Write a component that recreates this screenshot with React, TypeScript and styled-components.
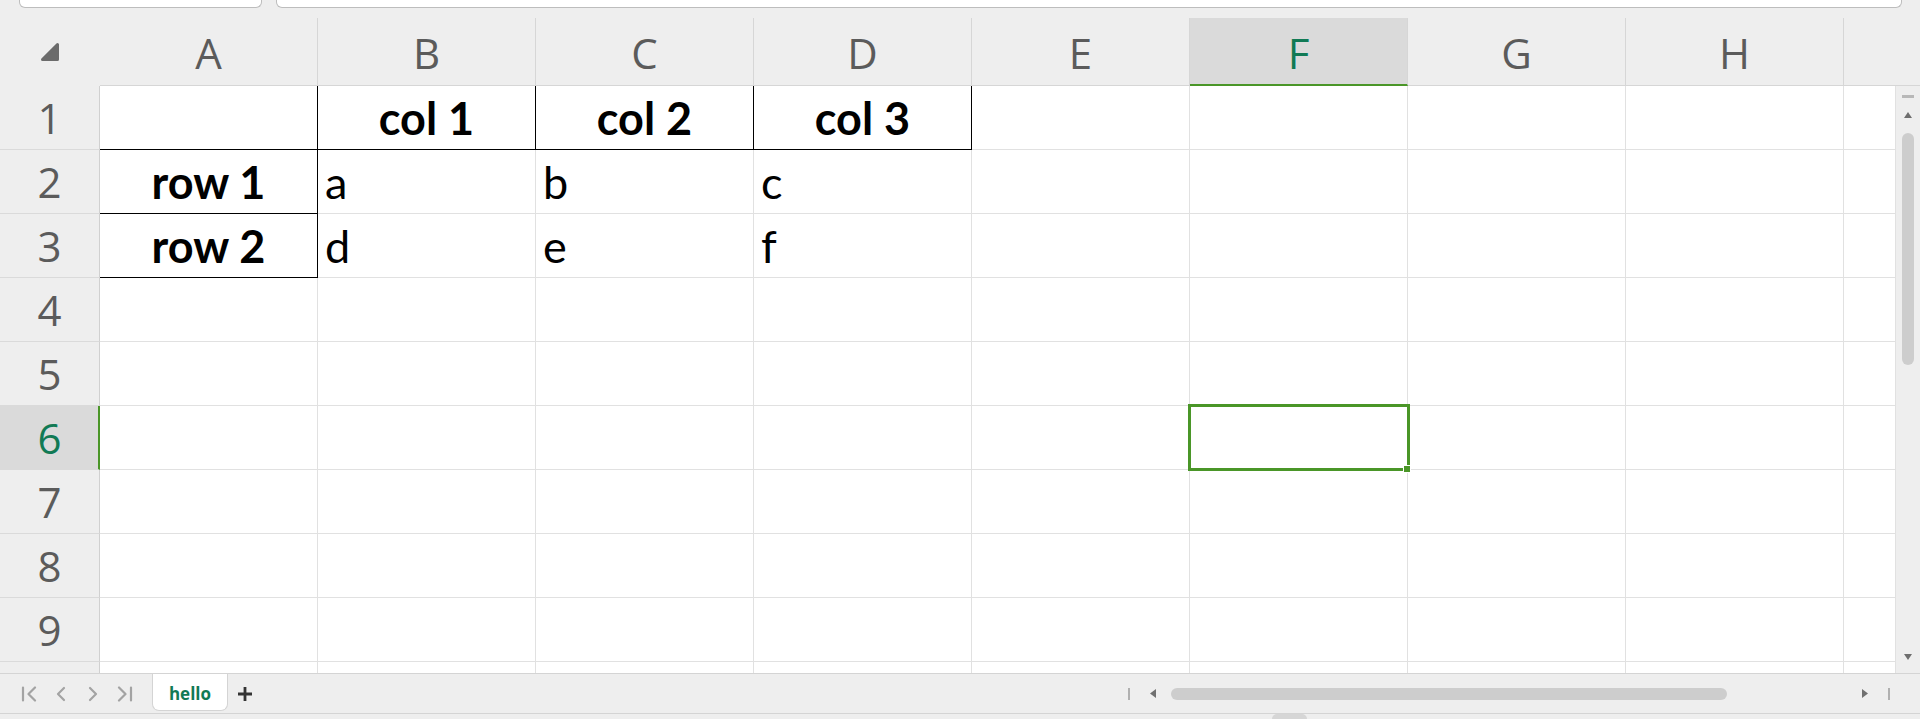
import React from "react";
import styled, { createGlobalStyle } from "styled-components";

const GREEN = "#4a9628";
const SEL_TEXT = "#117a55";

const Global = createGlobalStyle`
  html, body { margin: 0; padding: 0; background: #eeeeee; }
  #root { width: 1920px; height: 719px; overflow: hidden; }
`;

const Page = styled.div`
  width: 1920px;
  height: 719px;
  display: flex;
  flex-direction: column;
  background: #eeeeee;
  overflow: hidden;
  font-family: "Open Sans", "Noto Sans", sans-serif;
`;

const TopBar = styled.div`
  height: 18px;
  flex: none;
  display: flex;
  align-items: flex-start;
`;

const InputBox = styled.div<{ $grow?: boolean }>`
  box-sizing: border-box;
  height: 8px;
  background: #ffffff;
  border: 1px solid #bdbdbd;
  border-top: none;
  border-radius: 0 0 6px 6px;
  ${(p) => (p.$grow ? "flex: 1; margin: 0 18px 0 14px;" : "width: 243px; margin-left: 19px; flex: none;")}
`;

const HeaderRow = styled.div`
  height: 68px;
  flex: none;
  display: flex;
`;

const Corner = styled.div`
  width: 100px;
  flex: none;
  display: flex;
  align-items: center;
  justify-content: center;
`;

const ColHeader = styled.div<{ $sel?: boolean; $fill?: boolean }>`
  box-sizing: border-box;
  ${(p) => (p.$fill ? "flex: 1;" : "width: 218px; flex: none; border-right: 1px solid #d6d6d6;")}
  height: 68px;
  background: ${(p) => (p.$sel ? "#dadada" : "#eeeeee")};
  border-bottom: ${(p) => (p.$sel ? `2px solid ${GREEN}` : "1px solid #d6d6d6")};
  display: flex;
  align-items: center;
  justify-content: center;
  padding-top: ${(p) => (p.$sel ? "3px" : "2px")};
  font-family: "Open Sans", sans-serif;
  font-size: 42px;
  line-height: 42px;
  color: ${(p) => (p.$sel ? SEL_TEXT : "#5b5b5b")};
`;

const Body = styled.div`
  height: 587px;
  flex: none;
  display: flex;
`;

const GridArea = styled.div`
  flex: 1;
  display: flex;
  flex-direction: column;
  overflow: hidden;
  background: #ffffff;
`;

const Row = styled.div`
  height: 64px;
  flex: none;
  display: flex;
`;

const RowHeader = styled.div<{ $sel?: boolean }>`
  box-sizing: border-box;
  width: 100px;
  flex: none;
  height: 64px;
  background: ${(p) => (p.$sel ? "#dadada" : "#eeeeee")};
  border-right: ${(p) => (p.$sel ? `2px solid ${GREEN}` : "1px solid #d0d0d0")};
  border-bottom: 1px solid #dadada;
  display: flex;
  align-items: center;
  justify-content: center;
  padding-left: ${(p) => (p.$sel ? "1px" : "0")};
  font-family: "Open Sans", sans-serif;
  font-size: 42px;
  line-height: 42px;
  color: ${(p) => (p.$sel ? SEL_TEXT : "#5b5b5b")};
`;

const Cell = styled.div<{
  $rb?: boolean;
  $bb?: boolean;
  $bold?: boolean;
  $center?: boolean;
  $fill?: boolean;
  $sel?: boolean;
}>`
  box-sizing: border-box;
  ${(p) => (p.$fill ? "flex: 1;" : "width: 218px; flex: none;")}
  ${(p) => (p.$sel ? "position: relative;" : "")}
  height: 64px;
  border-right: 1px solid ${(p) => (p.$rb ? "#000000" : "#e1e1e1")};
  border-bottom: 1px solid ${(p) => (p.$bb ? "#000000" : "#e1e1e1")};
  display: flex;
  align-items: flex-end;
  justify-content: ${(p) => (p.$center ? "center" : "flex-start")};
  padding: 0 7px 8px;
  font-family: Lato, "Open Sans", sans-serif;
  font-size: 45px;
  line-height: 45px;
  font-weight: ${(p) => (p.$bold ? 700 : 400)};
  color: #000000;
  white-space: nowrap;
`;

const Selection = styled.div`
  position: absolute;
  box-sizing: border-box;
  top: -2px;
  left: -2px;
  right: -3px;
  bottom: -2px;
  border: 3px solid ${GREEN};
  pointer-events: none;
`;

const FillHandle = styled.div`
  position: absolute;
  box-sizing: border-box;
  width: 8px;
  height: 8px;
  right: -4px;
  bottom: -4px;
  background: ${GREEN};
  border: 1px solid #ffffff;
  z-index: 2;
`;

const VScroll = styled.div`
  width: 24px;
  flex: none;
  background: #eeeeee;
  display: flex;
  flex-direction: column;
  align-items: center;
`;

const Dash = styled.div`
  width: 12px;
  height: 3px;
  margin-top: 9px;
  background: #b8b8b8;
`;

const Thumb = styled.div<{ $horizontal?: boolean }>`
  background: #cdcdcd;
  border-radius: 6px;
  ${(p) =>
    p.$horizontal
      ? "width: 556px; height: 12px;"
      : "width: 12px; height: 232px; margin-top: 15px;"}
`;

const Spacer = styled.div`
  flex: 1;
`;

const Tri = styled.svg<{ $mt?: number; $mb?: number; $ml?: number; $mr?: number }>`
  display: block;
  flex: none;
  margin: ${(p) => `${p.$mt || 0}px ${p.$mr || 0}px ${p.$mb || 0}px ${p.$ml || 0}px`};
`;

const BottomBar = styled.div`
  box-sizing: border-box;
  height: 41px;
  flex: none;
  display: flex;
  align-items: center;
  border-top: 1px solid #d4d4d4;
  border-bottom: 1px solid #d4d4d4;
  background: #eeeeee;
`;

const NavGroup = styled.div`
  display: flex;
  align-items: center;
  margin-left: 13px;
`;

const NavButton = styled.div`
  width: 32px;
  height: 39px;
  display: flex;
  align-items: center;
  justify-content: center;
`;

const SheetTab = styled.div`
  box-sizing: border-box;
  align-self: flex-start;
  width: 76px;
  height: 37px;
  margin-left: 11px;
  background: #ffffff;
  border: 1px solid #d4d4d4;
  border-top: none;
  border-radius: 0 0 7px 7px;
  display: flex;
  align-items: center;
  justify-content: center;
  padding-top: 3px;
  font-family: "Open Sans", sans-serif;
  font-weight: 700;
  font-size: 17px;
  color: ${SEL_TEXT};
`;

const AddButton = styled.div`
  width: 24px;
  height: 39px;
  margin-left: 5px;
  display: flex;
  align-items: center;
  justify-content: center;
`;

const HScroll = styled.div`
  margin-left: auto;
  margin-right: 30px;
  width: 762px;
  display: flex;
  align-items: center;
`;

const EndBar = styled.div<{ $ml?: number; $mr?: number }>`
  width: 2px;
  height: 12px;
  background: #b0b0b0;
  flex: none;
  margin-left: ${(p) => p.$ml || 0}px;
  margin-right: ${(p) => p.$mr || 0}px;
`;

const Track = styled.div`
  flex: 1;
  display: flex;
  align-items: center;
`;

const BottomStrip = styled.div`
  height: 5px;
  flex: none;
  display: flex;
  align-items: flex-end;
  padding-left: 1272px;
`;

const Bump = styled.div`
  width: 35px;
  height: 5px;
  background: #d6d6d6;
  border-radius: 7px 7px 0 0;
`;

type CellData = { t?: string; bold?: boolean; center?: boolean; rb?: boolean; bb?: boolean };

const COLS = ["A", "B", "C", "D", "E", "F", "G", "H"];
const SEL_COL = 5;
const SEL_ROW = 6;
const VISIBLE_LABELS = 9;

const DATA: Record<number, CellData[]> = {
  1: [
    { rb: true, bb: true },
    { t: "col 1", bold: true, center: true, rb: true, bb: true },
    { t: "col 2", bold: true, center: true, rb: true, bb: true },
    { t: "col 3", bold: true, center: true, rb: true, bb: true },
  ],
  2: [
    { t: "row 1", bold: true, center: true, rb: true, bb: true },
    { t: "a" },
    { t: "b" },
    { t: "c" },
  ],
  3: [
    { t: "row 2", bold: true, center: true, rb: true, bb: true },
    { t: "d" },
    { t: "e" },
    { t: "f" },
  ],
};

const NAV_PATHS = [
  "M2 1.5V14.5 M14 1.5L7.5 8L14 14.5",
  "M11 2L5 8L11 14",
  "M5 2L11 8L5 14",
  "M2 1.5L8.5 8L2 14.5 M14 1.5V14.5",
];

export default function App() {
  const rows = Array.from({ length: 10 }, (_, i) => i + 1);
  return (
    <>
      <Global />
      <Page>
        <TopBar>
          <InputBox />
          <InputBox $grow />
        </TopBar>
        <HeaderRow>
          <Corner>
            <svg width="22" height="22" viewBox="0 0 22 22">
              <path
                d="M18.5 3.5 L18.5 18.5 L3.5 18.5 Z"
                fill="#6b6b6b"
                stroke="#6b6b6b"
                strokeWidth="3"
                strokeLinejoin="round"
              />
            </svg>
          </Corner>
          {COLS.map((c, i) => (
            <ColHeader key={c} $sel={i === SEL_COL}>
              {c}
            </ColHeader>
          ))}
          <ColHeader $fill />
        </HeaderRow>
        <Body>
          <GridArea>
            {rows.map((r) => (
              <Row key={r}>
                <RowHeader $sel={r === SEL_ROW}>{r <= VISIBLE_LABELS ? r : ""}</RowHeader>
                {COLS.map((c, ci) => {
                  const d = (DATA[r] && DATA[r][ci]) || {};
                  const sel = r === SEL_ROW && ci === SEL_COL;
                  return (
                    <Cell
                      key={c}
                      $rb={d.rb}
                      $bb={d.bb}
                      $bold={d.bold}
                      $center={d.center}
                      $sel={sel}
                    >
                      {d.t}
                      {sel && (
                        <>
                          <Selection />
                          <FillHandle />
                        </>
                      )}
                    </Cell>
                  );
                })}
                <Cell $fill />
              </Row>
            ))}
          </GridArea>
          <VScroll>
            <Dash />
            <Tri width="8" height="6" viewBox="0 0 8 6" $mt={14}>
              <path d="M4 0L8 6H0Z" fill="#6e6e6e" />
            </Tri>
            <Thumb />
            <Spacer />
            <Tri width="8" height="6" viewBox="0 0 8 6" $mb={13}>
              <path d="M0 0H8L4 6Z" fill="#6e6e6e" />
            </Tri>
          </VScroll>
        </Body>
        <BottomBar>
          <NavGroup>
            {NAV_PATHS.map((d, i) => (
              <NavButton key={i}>
                <svg width="16" height="16" viewBox="0 0 16 16">
                  <path
                    d={d}
                    fill="none"
                    stroke="#a3a3a3"
                    strokeWidth="2.2"
                    strokeLinecap="round"
                    strokeLinejoin="round"
                  />
                </svg>
              </NavButton>
            ))}
          </NavGroup>
          <SheetTab>hello</SheetTab>
          <AddButton>
            <svg width="16" height="16" viewBox="0 0 16 16">
              <path d="M8 1V15 M1 8H15" stroke="#333333" strokeWidth="2.8" />
            </svg>
          </AddButton>
          <HScroll>
            <EndBar $mr={19} />
            <Tri width="8" height="9" viewBox="0 0 8 9" $mr={14}>
              <path d="M1 4.5L7 0V9Z" fill="#707070" />
            </Tri>
            <Track>
              <Thumb $horizontal />
            </Track>
            <Tri width="8" height="9" viewBox="0 0 8 9" $ml={8}>
              <path d="M1 0L7 4.5L1 9Z" fill="#707070" />
            </Tri>
            <EndBar $ml={19} />
          </HScroll>
        </BottomBar>
        <BottomStrip>
          <Bump />
        </BottomStrip>
      </Page>
    </>
  );
}
